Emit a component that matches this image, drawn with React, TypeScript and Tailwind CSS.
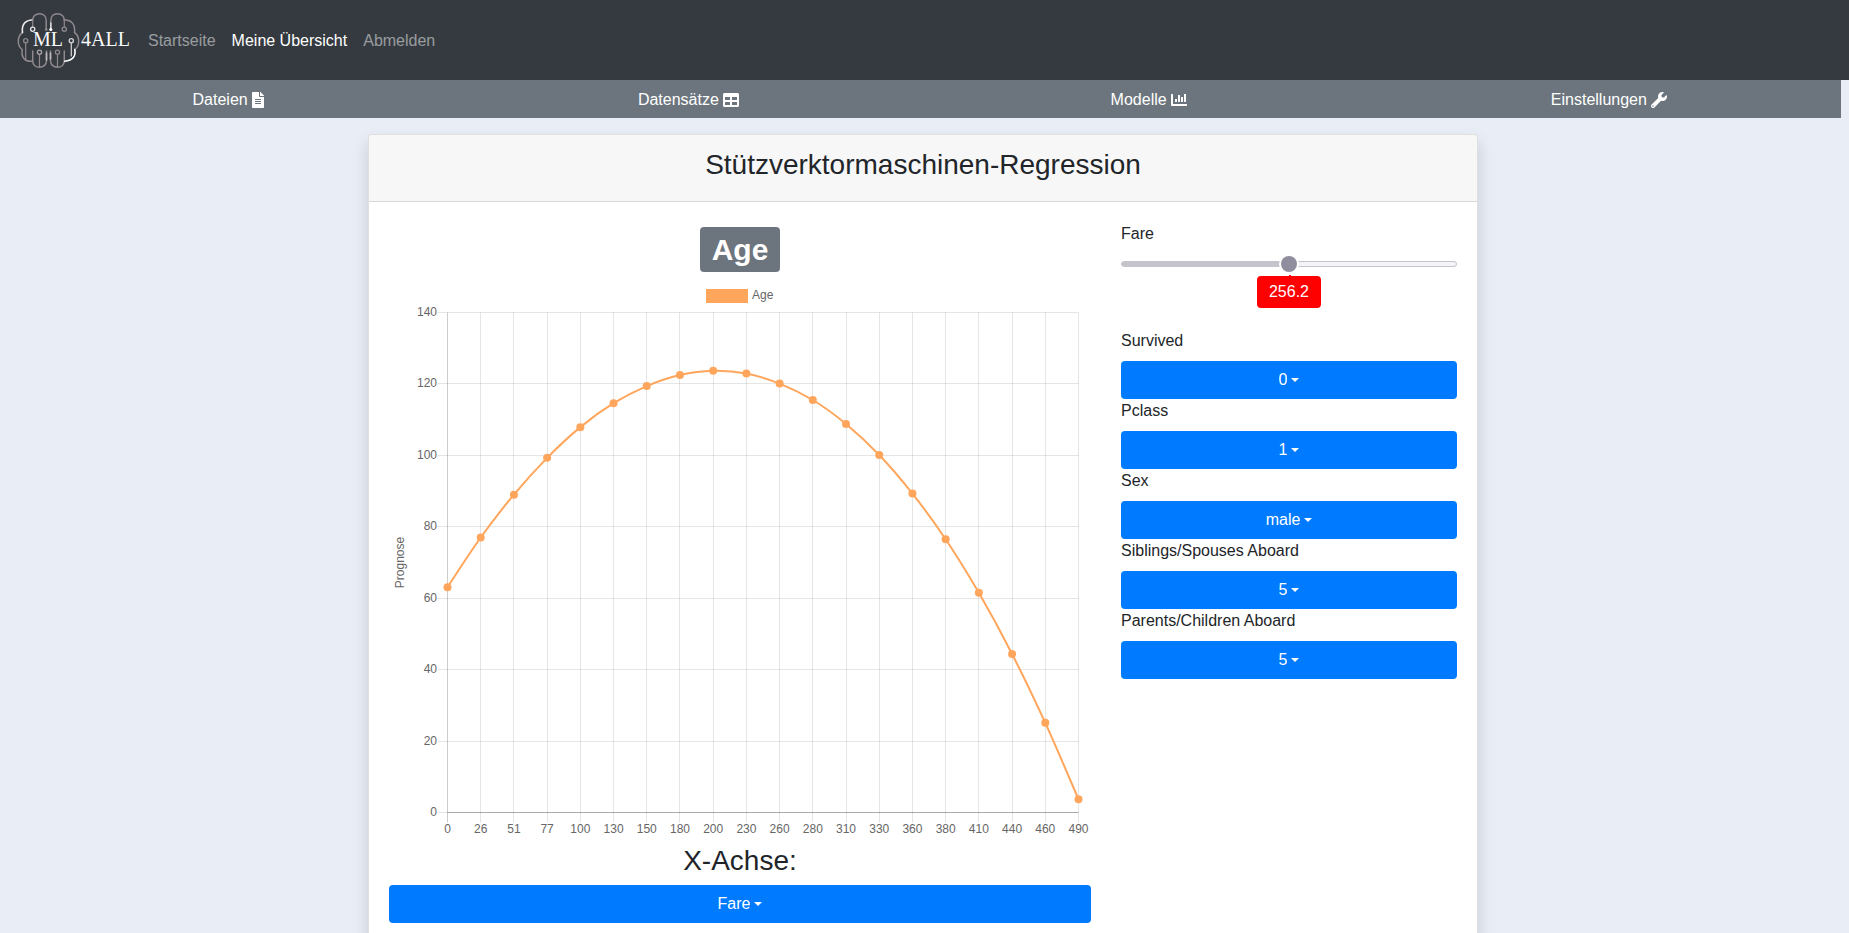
import { useState } from "react";
import { FaChartBar, FaFileAlt, FaTable, FaWrench } from "react-icons/fa";

const points: [string, number][] = [
  ["0", 63.1],
  ["26", 77],
  ["51", 89],
  ["77", 99.3],
  ["100", 107.9],
  ["130", 114.6],
  ["150", 119.4],
  ["180", 122.5],
  ["200", 123.7],
  ["230", 122.9],
  ["260", 120.1],
  ["280", 115.5],
  ["310", 108.8],
  ["330", 100.1],
  ["360", 89.3],
  ["380", 76.5],
  ["410", 61.5],
  ["440", 44.4],
  ["460", 25.1],
  ["490", 3.7],
];

const yTicks = [0, 20, 40, 60, 80, 100, 120, 140];

const LEFT = 58.5;
const RIGHT = 689.5;
const TOP = 34.5;
const BOTTOM = 534.5;

const xAt = (i: number) => LEFT + ((RIGHT - LEFT) * i) / (points.length - 1);
const yAt = (v: number) => BOTTOM - ((BOTTOM - TOP) * v) / 140;
const crisp = (n: number) => Math.floor(n) + 0.5;

// Smooth line through all points; each inner point gets handles parallel to its neighbours.
function linePath() {
  const xy = points.map(([, v], i) => [xAt(i), yAt(v)]);
  const at = (i: number) => xy[Math.min(xy.length - 1, Math.max(0, i))];
  let d = `M${xy[0][0]} ${xy[0][1]}`;
  for (let i = 0; i < xy.length - 1; i++) {
    const [p0, p1, p2, p3] = [at(i - 1), at(i), at(i + 1), at(i + 2)];
    const t = 0.18;
    d += `C${p1[0] + (p2[0] - p0[0]) * t} ${p1[1] + (p2[1] - p0[1]) * t} ${p2[0] - (p3[0] - p1[0]) * t} ${p2[1] - (p3[1] - p1[1]) * t} ${p2[0]} ${p2[1]}`;
  }
  return d;
}

function Chart() {
  return (
    <svg
      viewBox="0 0 702 565"
      className="block h-auto w-full font-['Liberation_Sans',Arial,sans-serif] text-[12px]"
      role="img"
      aria-label="Prognose Age"
    >
      <rect x="317" y="11" width="42" height="14" fill="#ffa65c" />
      <text x="363" y="21" fill="#666">
        Age
      </text>
      {points.map(([label], i) => (
        <g key={label}>
          <path
            d={`M${crisp(xAt(i))} ${TOP}V${BOTTOM + 10}`}
            stroke={i === 0 ? "rgba(0,0,0,.2)" : "rgba(0,0,0,.1)"}
          />
          <text x={xAt(i)} y="555" textAnchor="middle" fill="#666">
            {label}
          </text>
        </g>
      ))}
      {yTicks.map((v) => (
        <g key={v}>
          <path d={`M${LEFT - 10} ${crisp(yAt(v))}H${RIGHT}`} stroke="rgba(0,0,0,.1)" />
          <text x="48" y={crisp(yAt(v)) + 3} textAnchor="end" fill="#666">
            {v}
          </text>
        </g>
      ))}
      <path d={`M${LEFT} ${BOTTOM}H${RIGHT}`} stroke="rgba(0,0,0,.25)" />
      <text transform="translate(15 284.5) rotate(-90)" textAnchor="middle" fill="#666">
        Prognose
      </text>
      <path d={linePath()} fill="none" stroke="#ffa65c" strokeWidth="2" />
      {points.map(([label, v], i) => (
        <circle key={label} cx={xAt(i)} cy={yAt(v)} r="4" fill="#ffa65c" />
      ))}
    </svg>
  );
}

function Logo() {
  return (
    <svg width="116" height="58" viewBox="0 0 116 58" className="block" role="img" aria-label="ML 4ALL">
      <g fill="none" stroke="#8f888d" strokeWidth="1.5" strokeLinecap="round">
        <path d="M30.200 18.300V9.500C30.200 5.500 27.500 2.700 23.500 2.700S16.700 5.500 16.700 9" />
        <path d="M34.800 18.300V9.500C34.800 5.500 37.500 2.700 41.500 2.700S48.300 5.500 48.300 9" />
        <path d="M48.300 9C55 8.500 59.500 13 58.500 21.500C64 25 64 35 58.800 38.500" />
        <path d="M6.500 21.500C1 25 1 35 6.200 38.500C5 46 8.500 51 16.500 50.300" />
        <path d="M16.700 40V49.500C16.700 53.500 19.500 56.300 23.500 56.300S30.500 53.500 30.500 49.500V40" />
        <path d="M48.300 40V49.500C48.300 53.500 45.500 56.300 41.500 56.300S34.500 53.500 34.500 49.500V40" />
        <path d="M16.700 8V16M48.300 8V16M23.500 43.500V56M41.500 43.500V56M9.700 32V48.500" strokeWidth="1.200" />
        <circle cx="48.300" cy="18.200" r="2.100" strokeWidth="1.300" />
        <circle cx="9.700" cy="29.800" r="2.100" strokeWidth="1.300" />
        <circle cx="23.500" cy="41.300" r="2.100" strokeWidth="1.300" stroke="#aaa5a9" />
        <circle cx="41.500" cy="41.300" r="2.100" strokeWidth="1.300" />
      </g>
      <g fill="none" strokeWidth="1.600" strokeLinecap="round">
        <path d="M15.500 9C9 9.500 5.500 13.500 6.500 21.500" stroke="#eceaec" />
        <path d="M58.800 38.500C60 45 57 49.500 48.800 50.300" stroke="#fff" />
        <path d="M55.300 32V45" stroke="#d8d5d8" strokeWidth="1.200" />
        <path d="M30.500 42V49M34.500 42V48" stroke="#bcb8bb" />
        <path d="M34.800 12V18" stroke="#d8d5d8" />
        <circle cx="16.700" cy="18.200" r="2.100" strokeWidth="1.300" stroke="#e8e6e8" />
        <circle cx="55.300" cy="29.800" r="2.100" strokeWidth="1.300" stroke="#d8d5d8" />
      </g>
      <circle cx="30.200" cy="18.500" r="1.300" fill="#8f888d" />
      <circle cx="34.800" cy="18.500" r="1.600" fill="#fff" />
      <g fill="#f8f9fa" fontSize="20" fontFamily="'Liberation Serif', 'Times New Roman', serif">
        <text x="17" y="35">ML</text>
        <text x="65" y="35">4ALL</text>
      </g>
    </svg>
  );
}

type DropdownProps = { id: string; value: string; options: string[] };

function Dropdown({ id, value, options }: DropdownProps) {
  return (
    <label
      htmlFor={id}
      className="flex h-[38px] w-full cursor-pointer items-center justify-center gap-1 rounded bg-[#007bff] text-white"
    >
      <select
        id={id}
        defaultValue={value}
        className="cursor-pointer appearance-none bg-transparent leading-6 outline-none [field-sizing:content]"
      >
        {options.map((o) => (
          <option key={o} className="text-black">
            {o}
          </option>
        ))}
      </select>
      <span aria-hidden="true" className="border-x-4 border-t-4 border-x-transparent border-t-white" />
    </label>
  );
}

function Slider() {
  const max = 512.4;
  const [value, setValue] = useState(256.2);
  const percent = (value / max) * 100;
  return (
    <div className="relative h-[75px] pt-[7px]">
      <input
        id="fare"
        type="range"
        min={0}
        max={max}
        step={0.1}
        value={value}
        onChange={(e) => setValue(Number(e.target.value))}
        style={{
          backgroundImage: `linear-gradient(to right, #c5c4cc ${percent}%, #f4f3f7 ${percent}%)`,
        }}
        className="block h-1.5 w-full cursor-pointer appearance-none rounded-full border border-[#c5c4cc] bg-origin-border [&::-webkit-slider-thumb]:size-4 [&::-webkit-slider-thumb]:appearance-none [&::-webkit-slider-thumb]:rounded-full [&::-webkit-slider-thumb]:bg-[#908d9f] [&::-webkit-slider-thumb]:shadow-[0_0_0_2px_white]"
      />
      <output
        htmlFor="fare"
        style={{ left: `${percent}%` }}
        className="absolute top-[22px] h-8 w-16 -translate-x-1/2 rounded bg-[red] text-center leading-8 text-white before:absolute before:-top-px before:left-1/2 before:h-px before:w-0.5 before:bg-[red]"
      >
        {value}
      </output>
    </div>
  );
}

const tabs = [
  { name: "Dateien", Icon: FaFileAlt, iconClass: "h-4 w-3" },
  { name: "Datensätze", Icon: FaTable, iconClass: "size-4" },
  { name: "Modelle", Icon: FaChartBar, iconClass: "size-4" },
  { name: "Einstellungen", Icon: FaWrench, iconClass: "size-4" },
];

const fields = [
  { id: "survived", label: "Survived", value: "0", options: ["0", "1"] },
  { id: "pclass", label: "Pclass", value: "1", options: ["1", "2", "3"] },
  { id: "sex", label: "Sex", value: "male", options: ["male", "female"] },
  { id: "siblings", label: "Siblings/Spouses Aboard", value: "5", options: ["0", "1", "2", "3", "4", "5", "8"] },
  { id: "parents", label: "Parents/Children Aboard", value: "5", options: ["0", "1", "2", "3", "4", "5", "6"] },
];

export default function App() {
  return (
    <div className="min-h-screen bg-[#e9edf6] pb-4 font-['Liberation_Sans',Arial,sans-serif] text-base text-[#212529]">
      <header>
        <nav className="flex h-20 items-center bg-[#343a40] px-4 text-white/50">
          <a href="#" className="mr-2">
            <Logo />
          </a>
          <a href="#" className="px-2 pt-0.5">
            Startseite
          </a>
          <a href="#" className="px-2 pt-0.5 text-white" aria-current="page">
            Meine Übersicht
          </a>
          <a href="#" className="px-2 pt-0.5">
            Abmelden
          </a>
        </nav>
        <nav className="mr-2 grid h-[38px] grid-cols-4 bg-[#6c757d] pt-0.5 text-white">
          {tabs.map(({ name, Icon, iconClass }) => (
            <a key={name} href="#" className="flex items-center justify-center gap-1 pr-1">
              {name}
              <Icon aria-hidden="true" className={iconClass} />
            </a>
          ))}
        </nav>
      </header>

      <main className="mt-4 pr-[3px]">
        <section className="mx-auto w-full max-w-[1110px] rounded border border-black/[.125] bg-white shadow-[0_8px_16px_rgba(0,0,0,.15)]">
          <header className="rounded-t border-b border-black/[.125] bg-[#f7f7f7] pt-[13px] pb-[19px]">
            <h3 className="text-center text-[28px] leading-[34px]">Stützverktormaschinen-Regression</h3>
          </header>
          <div className="p-5">
            <div className="-mx-[15px] grid grid-cols-3">
              <div className="col-span-2 px-[15px]">
                <h1 className="mt-[5px] mb-1.5 flex justify-center">
                  <span className="rounded bg-[#6c757d] px-3 text-[30px] leading-[45px] font-bold text-white">
                    Age
                  </span>
                </h1>
                <Chart />
                <h3 className="mb-[7px] pt-px text-center text-[28px] leading-[34px]">
                  <label htmlFor="x-axis">X-Achse:</label>
                </h3>
                <Dropdown id="x-axis" value="Fare" options={["Fare", "Survived", "Pclass", "Sex"]} />
              </div>
              <div className="px-[15px]">
                <label htmlFor="fare" className="mb-2 block leading-6">
                  Fare
                </label>
                <Slider />
                {fields.map((f) => (
                  <div key={f.id}>
                    <label htmlFor={f.id} className="mb-2 block leading-6">
                      {f.label}
                    </label>
                    <Dropdown id={f.id} value={f.value} options={f.options} />
                  </div>
                ))}
              </div>
            </div>
          </div>
        </section>
      </main>
    </div>
  );
}
